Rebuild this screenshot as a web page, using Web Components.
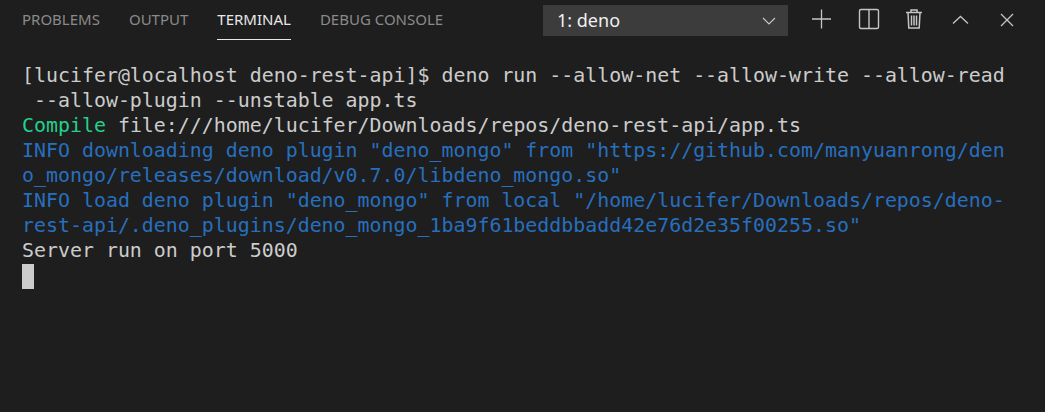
<!DOCTYPE html>
<html>
<head>
<meta charset="utf-8">
<style>
  html, body { margin: 0; height: 100%; background: #1e1e1e; overflow: hidden; }
</style>
</head>
<body>
<terminal-panel>
  <panel-tab>PROBLEMS</panel-tab>
  <panel-tab>OUTPUT</panel-tab>
  <panel-tab active>TERMINAL</panel-tab>
  <panel-tab>DEBUG CONSOLE</panel-tab>
  <terminal-select slot="actions">1: deno</terminal-select>
  <panel-action slot="actions" icon="add"></panel-action>
  <panel-action slot="actions" icon="split"></panel-action>
  <panel-action slot="actions" icon="trash"></panel-action>
  <panel-action slot="actions" icon="up"></panel-action>
  <panel-action slot="actions" icon="close"></panel-action>
  <terminal-output slot="body">
    <term-line>[lucifer@localhost deno-rest-api]$ deno run --allow-net --allow-write --allow-read</term-line>
    <term-line> --allow-plugin --unstable app.ts</term-line>
    <term-line><term-green>Compile</term-green> file:///home/lucifer/Downloads/repos/deno-rest-api/app.ts</term-line>
    <term-line blue>INFO downloading deno plugin "deno_mongo" from "https://github.com/manyuanrong/den</term-line>
    <term-line blue>o_mongo/releases/download/v0.7.0/libdeno_mongo.so"</term-line>
    <term-line blue>INFO load deno plugin "deno_mongo" from local "/home/lucifer/Downloads/repos/deno-</term-line>
    <term-line blue>rest-api/.deno_plugins/deno_mongo_1ba9f61beddbbadd42e76d2e35f00255.so"</term-line>
    <term-line>Server run on port 5000</term-line>
    <term-line cursor></term-line>
  </terminal-output>
</terminal-panel>

<script>
const panelTemplate = document.createElement("template");
panelTemplate.innerHTML = `
  <style>
    :host { display: block; height: 412px; background: #1e1e1e; }
    .header {
      display: flex;
      justify-content: space-between;
      align-items: flex-start;
      height: 63px;
      padding-left: 22px;
    }
    .tabs { display: flex; gap: 29px; }
    .actions { display: flex; align-items: flex-start; margin-top: 5px; margin-right: 15px; }
    .body { padding-left: 22px; }
  </style>
  <div class="header">
    <div class="tabs"><slot></slot></div>
    <div class="actions"><slot name="actions"></slot></div>
  </div>
  <div class="body"><slot name="body"></slot></div>
`;

customElements.define("terminal-panel", class extends HTMLElement {
  constructor() {
    super();
    this.attachShadow({ mode: "open" });
    this.shadowRoot.appendChild(panelTemplate.content.cloneNode(true));
  }
});

const tabTemplate = document.createElement("template");
tabTemplate.innerHTML = `
  <style>
    :host {
      display: block;
      height: 40px;
      box-sizing: border-box;
      padding-top: 9px;
      font: 15px/20px "Noto Sans", sans-serif;
      color: #8a8a8a;
      white-space: nowrap;
    }
    :host([active]) { color: #e7e7e7; border-bottom: 1px solid #e7e7e7; }
  </style>
  <slot></slot>
`;

customElements.define("panel-tab", class extends HTMLElement {
  constructor() {
    super();
    this.attachShadow({ mode: "open" });
    this.shadowRoot.appendChild(tabTemplate.content.cloneNode(true));
  }
});

const selectTemplate = document.createElement("template");
selectTemplate.innerHTML = `
  <style>
    :host {
      display: flex;
      align-items: center;
      justify-content: space-between;
      box-sizing: border-box;
      width: 245px;
      height: 31px;
      margin-right: 12px;
      padding: 0 12px 0 14px;
      background: #3c3c3c;
      color: #f0f0f0;
      font: 18px/31px "Noto Sans", sans-serif;
    }
    svg { display: block; }
  </style>
  <slot></slot>
  <svg width="14" height="8" viewBox="0 0 14 8" fill="none" stroke="#c8c8c8" stroke-width="1.1">
    <path d="M1 1l6 6 6-6"/>
  </svg>
`;

customElements.define("terminal-select", class extends HTMLElement {
  constructor() {
    super();
    this.attachShadow({ mode: "open" });
    this.shadowRoot.appendChild(selectTemplate.content.cloneNode(true));
  }
});

const actionIcons = {
  add: '<path d="M10.5 2.500v19M1 12h19"/>',
  split: '<rect x="2.500" y="2.500" width="19" height="19" rx="1.5" stroke-width="1.4"/><path d="M12 2.500v19" stroke-width="1.4"/>',
  trash: '<path d="M3 5.500h16M8 5.500V3h6v2.500M5 5.500l.8 15.500h10.400l.8-15.500M8.500 8.500v10M11 8.500v10M13.500 8.500v10" stroke-width="1.5"/>',
  up: '<path d="M4 16.500L11.500 9.500l7.500 7"/>',
  close: '<path d="M6 7l12 12M18 7L6 19"/>',
};

customElements.define("panel-action", class extends HTMLElement {
  constructor() {
    super();
    this.attachShadow({ mode: "open" });
    const icon = actionIcons[this.getAttribute("icon")];
    this.shadowRoot.innerHTML = `
      <style>
        :host { display: block; width: 24px; height: 24px; margin: 2px 11px 0; }
        svg { display: block; }
      </style>
      <svg width="24" height="24" viewBox="0 0 24 24" fill="none" stroke="#c5c5c5" stroke-width="1.3">${icon}</svg>
    `;
  }
});

const outputTemplate = document.createElement("template");
outputTemplate.innerHTML = `
  <style>
    :host {
      display: block;
      font: 19.92px/25px "DejaVu Sans Mono", monospace;
      color: #cccccc;
    }
  </style>
  <slot></slot>
`;

customElements.define("terminal-output", class extends HTMLElement {
  constructor() {
    super();
    this.attachShadow({ mode: "open" });
    this.shadowRoot.appendChild(outputTemplate.content.cloneNode(true));
  }
});

const lineTemplate = document.createElement("template");
lineTemplate.innerHTML = `
  <style>
    :host { display: block; height: 25px; }
    /* only the slotted text keeps its spaces, not this template's indentation */
    slot { white-space: pre; }
    .cursor { display: none; width: 12px; height: 25px; margin-top: 1px; background: #cccccc; }
    :host([blue]) { color: #276fbf; }
    :host([cursor]) .cursor { display: block; }
  </style>
  <slot></slot><div class="cursor"></div>
`;

customElements.define("term-line", class extends HTMLElement {
  constructor() {
    super();
    this.attachShadow({ mode: "open" });
    this.shadowRoot.appendChild(lineTemplate.content.cloneNode(true));
  }
});

customElements.define("term-green", class extends HTMLElement {
  constructor() {
    super();
    this.attachShadow({ mode: "open" });
    this.shadowRoot.innerHTML = `<style>:host { color: #23d18b; }</style><slot></slot>`;
  }
});
</script>
</body>
</html>
